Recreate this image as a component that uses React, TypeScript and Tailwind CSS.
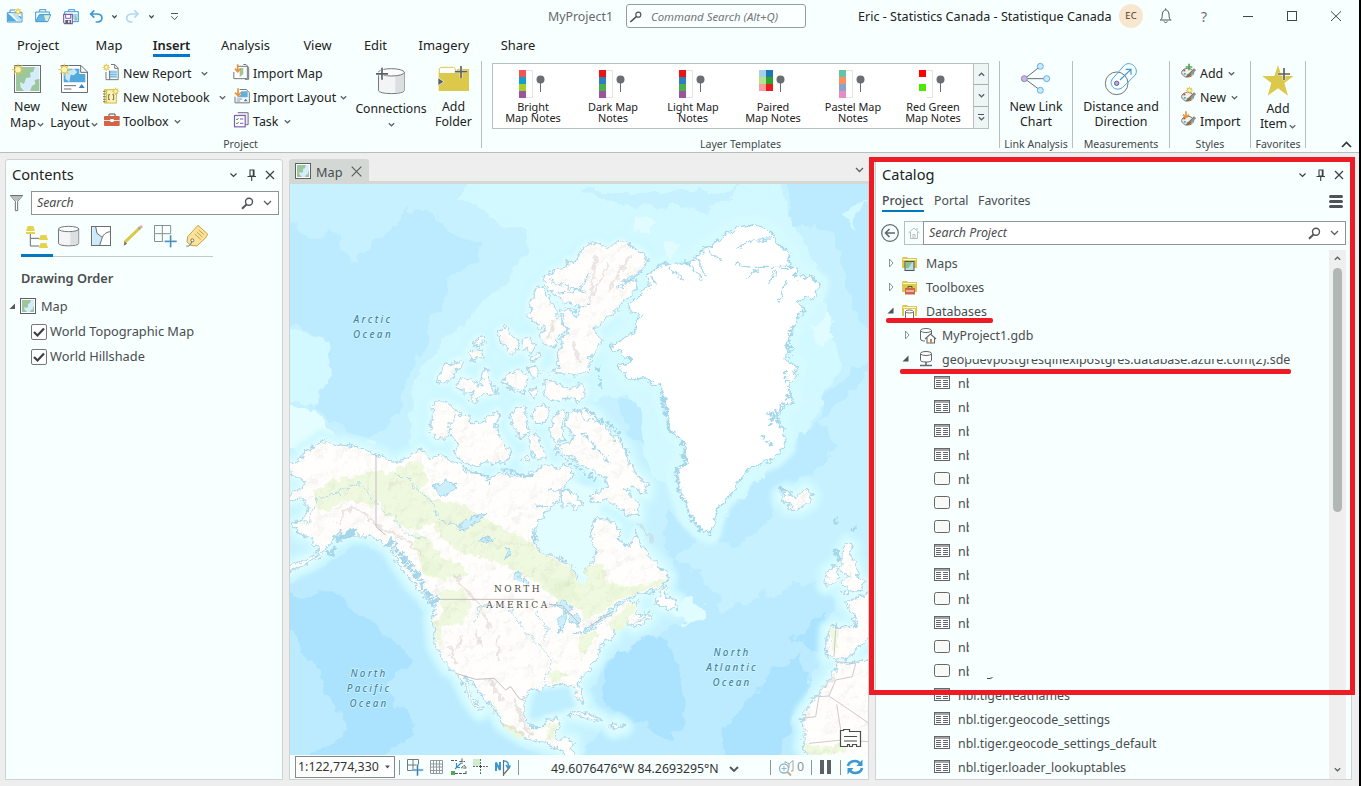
import React from "react";

type BoxProps = { x: number; y: number; w: number; h: number; s?: number; className?: string; children: React.ReactNode };

/* Icon cell: artwork is drawn on a grid of `s` units per pixel. */
function Art({ x, y, w, h, s = 3, className = "", children }: BoxProps) {
  return (
    <svg width={w / s} height={h / s} viewBox={`${x} ${y} ${w} ${h}`} className={`block shrink-0 ${className}`} fill="none">
      {children}
    </svg>
  );
}

function Chevron({ className = "", up = false }: { className?: string; up?: boolean }) {
  return (
    <svg width="7" height="5" viewBox="0 0 7 5" className={`block shrink-0 ${className}`} fill="none" stroke="#5c6064" strokeWidth="1.2">
      <path d={up ? "M.8 3.800 L3.500 1.200 L6.200 3.800" : "M.8 1.200 L3.500 3.800 L6.200 1.200"} />
    </svg>
  );
}

function WideChevron({ className = "" }: { className?: string }) {
  return (
    <svg width="9" height="6" viewBox="0 0 9 6" className={`block shrink-0 ${className}`} fill="none" stroke="#5c6064" strokeWidth="1.3">
      <path d="M1 1 L4.500 4.500 L8 1" />
    </svg>
  );
}

function Sun({ cx, cy, r }: { cx: number; cy: number; r: number }) {
  const rays = [0, 45, 90, 135, 180, 225, 270, 315];
  return (
    <g>
      {rays.map((a) => (
        <path key={a} d={`M${cx} ${cy - r * 1.1} V${cy - r * 1.8}`} stroke="#dcc84a" strokeWidth={3} transform={`rotate(${a} ${cx} ${cy})`} />
      ))}
      <circle cx={cx} cy={cy} r={r} fill="#fdf6b2" stroke="#dcb94a" strokeWidth={2.6} />
    </g>
  );
}

function MapTile({ size = 16 }: { size?: number }) {
  return (
    <svg width={size} height={size} viewBox="0 0 16 16" className="block shrink-0" fill="none">
      <rect x=".5" y=".5" width="15" height="15" fill="#fff" stroke="#5c6064" />
      <rect x="2" y="2" width="12" height="12" fill="#d5edfb" />
      <path d="M2 2h9l-1 3-2 1v3l-2 1-1-1-1 1 1 2 2 2H2zM14 14h-4l1-2 2-1v-2l1-1z" fill="#9cc79c" />
    </svg>
  );
}

const lands: string[] = [
  // mainland
  "M-10 850 L30 848 45 815 75 800 100 780 120 790 150 795 200 800 240 815 280 828 310 850 340 838 370 825 395 805 420 835 450 828 480 842 520 858 560 878 600 900 640 880 690 890 740 872 770 850 800 865 830 850 850 880 830 920 800 970 760 1010 738 1050 740 1090 760 1120 800 1130 850 1155 865 1190 872 1225 898 1215 888 1170 923 1130 908 1080 913 1020 948 1015 988 1040 993 1085 1018 1100 1043 1055 1058 1100 1113 1160 1138 1190 1133 1210 1098 1230 1053 1245 1023 1250 973 1280 933 1320 880 1355 883 1362 953 1315 993 1275 1023 1260 1048 1270 1038 1310 1083 1300 1085 1312 1038 1340 1023 1325 983 1340 973 1370 933 1400 923 1440 873 1495 868 1525 885 1560 880 1575 862 1545 850 1520 820 1510 780 1520 720 1530 705 1550 705 1610 725 1640 760 1640 780 1615 815 1615 805 1650 795 1675 850 1680 856 1740 830 1740 820 1710 760 1690 700 1670 640 1630 625 1600 590 1560 545 1500 528 1494 534 1520 558 1558 582 1590 572 1596 545 1560 520 1510 505 1480 475 1460 440 1400 435 1360 430 1320 440 1280 400 1240 370 1210 330 1150 300 1100 260 1075 230 1065 180 1065 150 1080 160 1052 130 1080 100 1120 60 1150 -10 1178 -10 1165 50 1140 92 1115 70 1075 30 1060 10 1030 40 1020 60 985 50 955 10 960 -10 950 40 925 48 905 15 885 -10 870 Z",
  // banks, victoria, melville, prince patrick
  "M430 670 L470 668 500 685 520 695 485 740 475 770 445 782 420 755 430 715 Z",
  "M480 735 L500 710 535 710 570 735 600 710 625 692 632 710 615 735 640 780 668 825 645 850 590 845 555 860 515 840 495 815 510 795 490 770 Z",
  "M445 600 L465 560 510 540 520 555 500 575 485 600 460 608 Z",
  "M500 625 L520 588 560 605 575 620 580 575 592 565 600 600 622 625 620 645 585 645 550 668 540 655 555 638 520 635 Z",
  "M535 520 L555 505 580 510 575 535 550 540 Z M550 490 L575 472 588 490 565 500 Z",
  "M628 455 L650 440 665 465 685 475 690 510 665 520 650 500 635 490 Z",
  "M700 475 L720 472 738 495 725 515 705 510 Z M722 528 L750 525 748 538 728 540 Z",
  "M640 600 L660 580 700 570 710 600 700 640 675 630 Z M715 565 L740 558 752 580 730 590 Z M722 625 L745 622 748 650 728 655 Z",
  "M668 700 L690 680 715 688 712 720 720 755 700 775 680 755 665 735 Z",
  "M735 685 L765 675 782 685 765 730 740 730 728 705 Z M785 770 L790 715 815 690 835 692 820 730 822 760 830 780 800 785 Z",
  "M722 770 L740 762 752 790 768 830 750 840 725 815 Z M700 830 L715 825 725 845 705 850 Z",
  // axel heiberg, ellesmere, devon
  "M720 410 L725 360 745 318 765 325 790 370 805 400 830 440 830 455 800 480 798 500 770 495 750 465 770 450 745 430 Z",
  "M765 300 L790 270 830 265 835 240 860 250 870 220 895 195 930 190 960 205 990 185 1030 200 1060 215 1080 245 1060 275 1000 305 1045 300 1048 318 1010 360 980 395 945 425 915 445 925 470 940 480 930 505 905 530 895 575 860 585 830 580 780 575 810 560 805 520 820 500 815 480 840 460 825 425 815 390 845 385 862 410 870 380 830 370 800 350 780 330 Z",
  "M765 600 L800 605 830 625 885 615 890 640 870 660 835 655 800 665 765 650 Z",
  // baffin
  "M832 740 L840 700 860 690 880 700 930 720 975 770 1010 810 1020 850 1040 880 1075 915 1070 945 1030 925 1010 925 1045 970 1048 1010 1020 1005 990 980 950 960 930 970 905 955 925 935 960 925 945 890 900 870 860 840 820 820 795 800 840 790 855 770 Z",
  "M870 690 L900 690 930 715 920 725 890 715 Z M815 930 L850 935 878 970 865 985 840 975 820 985 Z",
  "M1100 1260 L1128 1215 1135 1250 1165 1262 1162 1290 1110 1278 Z",
  "M1025 1330 L1070 1312 1075 1322 1035 1342 Z",
  // iceland
  "M1475 945 L1495 935 1520 950 1550 925 1570 945 1565 965 1535 985 1500 985 1490 965 1475 960 Z",
  // british isles, europe, africa
  "M1660 1115 L1675 1090 1692 1100 1680 1125 1700 1150 1708 1190 1728 1205 1715 1230 1660 1240 1675 1220 1660 1205 1675 1190 1655 1165 Z",
  "M1615 1175 L1640 1155 1650 1175 1642 1205 1610 1218 Z",
  "M1790 1215 L1735 1238 1715 1250 1670 1270 1690 1295 1705 1340 1635 1340 1618 1350 1615 1430 1640 1438 1685 1430 1710 1400 1735 1375 1790 1360 Z",
  "M1790 1440 L1735 1435 1680 1455 1650 1450 1620 1500 1590 1540 1545 1600 1540 1615 1548 1650 1540 1700 1555 1725 1565 1760 1790 1760 Z",
  // antilles
  "M840 1605 L865 1594 905 1602 940 1622 905 1618 870 1608 Z M960 1635 L985 1632 1005 1642 975 1650 Z",
];

const greenland =
  "M963 500 L1040 455 1052 400 1018 395 1025 365 1078 325 1075 285 1110 260 1155 245 1180 250 1215 240 1250 205 1315 160 1345 140 1400 135 1440 150 1470 190 1505 225 1490 250 1520 265 1520 295 1560 288 1590 310 1580 345 1520 368 1545 385 1525 415 1500 470 1485 540 1525 560 1500 620 1510 660 1460 705 1480 740 1490 800 1455 835 1380 865 1330 935 1295 970 1280 1005 1265 1062 1235 1050 1195 1005 1170 930 1160 870 1195 825 1180 780 1150 755 1130 690 1115 620 1070 592 1025 600 985 555 1030 540 Z";

const greens: string[] = [
  "M75 940 L130 900 200 890 260 870 300 880 320 860 400 850 420 900 400 930 440 960 520 975 600 1020 660 1050 720 1080 760 1120 850 1160 865 1200 895 1220 895 1300 830 1270 780 1240 735 1200 690 1180 640 1150 560 1130 500 1110 440 1060 430 1000 380 950 320 940 250 980 160 960 110 1000 80 980 Z",
  "M370 1050 L420 1080 460 1130 530 1160 540 1190 450 1200 400 1180 380 1120 Z",
  "M260 880 L400 930 440 1030 360 1050 280 1000 Z",
  "M440 1240 L520 1220 550 1280 520 1330 440 1340 460 1290 Z M435 1320 L455 1330 460 1400 440 1370 Z",
  "M890 1160 L940 1150 960 1210 1020 1220 1090 1210 1130 1190 1128 1210 1050 1240 980 1260 940 1300 880 1320 Z",
  "M965 1320 L1030 1270 1045 1270 1000 1350 960 1360 Z M873 1370 L930 1350 900 1400 873 1420 Z",
  "M780 1480 L800 1465 840 1490 790 1510 Z M870 1390 L900 1390 890 1420 Z M610 1550 L635 1600 615 1590 Z M640 1635 L710 1660 700 1675 650 1650 Z M780 1630 L805 1632 790 1665 775 1680 Z",
  "M1622 1345 L1650 1345 1640 1420 1625 1400 Z M1545 1690 L1600 1700 1680 1690 1660 1720 1560 1730 Z M360 850 L395 845 410 870 340 870 Z",
];

function WorldMap() {
  return (
    <svg width="578" height="571" viewBox="290 184 578 571" className="block">
      <defs>
        <filter id="coast" x="-5%" y="-5%" width="110%" height="110%">
          <feTurbulence type="fractalNoise" baseFrequency="0.05" numOctaves="4" seed="4" />
          <feDisplacementMap in="SourceGraphic" scale="30" xChannelSelector="R" yChannelSelector="G" />
        </filter>
        <filter id="depth" x="-5%" y="-5%" width="110%" height="110%">
          <feTurbulence type="fractalNoise" baseFrequency="0.018" numOctaves="4" seed="9" />
          <feDisplacementMap in="SourceGraphic" scale="60" xChannelSelector="R" yChannelSelector="G" />
        </filter>
        <filter id="soft"><feGaussianBlur stdDeviation="7" /></filter>
        <filter id="relief" x="0" y="0" width="100%" height="100%">
          <feTurbulence type="fractalNoise" baseFrequency="0.022" numOctaves="4" seed="2" result="n" />
          <feDiffuseLighting in="n" surfaceScale="9" lightingColor="#fffdf9" diffuseConstant="1.25" result="l">
            <feDistantLight azimuth="225" elevation="55" />
          </feDiffuseLighting>
          <feComposite in="l" in2="SourceGraphic" operator="in" />
        </filter>
      </defs>
      <g transform="translate(289 180) scale(.333333)">
        <rect width="1750" height="1740" fill="#c8f1ff" />
        <g filter="url(#depth)">
          <path d="M-60 110 L0 120 60 180 140 150 190 250 250 190 330 150 350 85 430 95 480 160 570 190 575 240 520 280 460 280 470 370 420 450 390 520 350 620 340 700 250 775 180 750 70 690 120 600 130 480 60 460 -60 420 Z" fill="#bcebff" />
          <path d="M560 -60 L900 -60 1500 -60 1480 60 1600 300 1650 560 1520 830 1300 1060 1100 900 1000 640 820 700 600 900 360 820 370 640 420 530 560 400 720 220 700 160 500 60 Z" fill="#d2f9ff" />
          <path d="M860 30 L1380 30 1240 90 1000 80 Z" fill="#c8f1ff" />
          <path d="M1510 -60 L1800 -60 1800 540 1690 380 1640 150 1500 130 Z" fill="#bcebff" />
          <path d="M1800 520 L1700 570 1600 660 1600 740 1660 800 1560 880 1440 1010 1350 1100 1200 1040 1130 1000 1130 1110 1240 1180 1300 1290 1500 1220 1590 1200 1640 1290 1600 1420 1500 1600 1600 1800 -60 1800 -60 1230 120 1150 230 1080 330 1180 420 1330 470 1480 620 1640 840 1780 960 1600 880 1560 960 1420 1180 1330 1100 1200 Z" fill="#bcebff" />
          <path d="M1400 1080 L1560 960 1640 1000 1560 1120 1380 1190 1330 1160 Z" fill="#c8f1ff" />
          <path d="M-60 1240 L130 1240 230 1310 370 1440 300 1520 380 1650 210 1800 -60 1800 180 1650 Z" fill="#abe3ff" />
          <path d="M960 1420 L1120 1360 1180 1480 1200 1600 1140 1690 1030 1620 940 1560 Z M1420 1500 L1540 1420 1560 1520 1460 1760 1290 1760 1310 1640 Z M1500 1380 L1620 1300 1600 1420 Z" fill="#abe3ff" />
          <path d="M990 650 L1060 690 1070 800 1020 770 Z" fill="#bcebff" />
          <path d="M20 460 L130 480 120 600 70 680 -40 650 -40 450 Z M1650 90 L1720 60 1700 150 Z" fill="#d2f9ff" />
          <path d="M-60 690 L60 690 180 780 300 800 -60 820 Z" fill="#e4fdff" />
        </g>
        <g filter="url(#soft)" fill="none" strokeLinejoin="round">
          {lands.map((d, i) => (
            <path key={i} d={d} stroke="#cdf8ff" strokeWidth="60" fill="#d8fbff" />
          ))}
          {lands.map((d, i) => (
            <path key={i} d={d} stroke="#e0fcff" strokeWidth="24" fill="#e0fcff" />
          ))}
          <path d={greenland} stroke="#d6fbff" strokeWidth="60" />
          <path d="M780 930 L840 900 930 930 940 1100 900 1230 840 1180 740 1110 740 1050 Z" fill="#e2fdff" />
          <path d="M740 1530 L840 1520 860 1580 720 1620 Z" fill="#bfeeff" />
        </g>
        <g filter="url(#depth)">
          <path d="M1150 1290 L1190 1255 1250 1290 1190 1345 Z M1560 440 L1620 400 1640 470 1600 500 Z M1120 190 L1170 200 1140 240 Z M1040 110 L1100 130 1040 160 Z" fill="#e0fcff" />
        </g>
        <g filter="url(#coast)" stroke="#a6d6ea" strokeWidth="4" strokeLinejoin="round">
          {lands.map((d, i) => (
            <path key={i} d={d} fill="#fffefb" />
          ))}
          <path d={greenland} fill="#ffffff" />
        </g>
        <g filter="url(#coast)" fill="#eaf8d6">
          {greens.map((d, i) => (
            <path key={i} d={d} />
          ))}
        </g>
        <g filter="url(#coast)" opacity=".6" fill="#dff3c8">
          <path d="M740 1180 L850 1200 880 1260 810 1260 Z M390 1120 L440 1140 450 1190 410 1180 Z M960 1220 L1020 1225 980 1250 Z" />
        </g>
        <g filter="url(#coast)">
          <g filter="url(#relief)" style={{ mixBlendMode: "multiply" }} opacity=".24">
            {lands.map((d, i) => (
              <path key={i} d={d} fill="#fff" />
            ))}
          </g>
        </g>
        {/* mountain shading */}
        <g filter="url(#coast)" stroke="#cfc4bf" strokeLinecap="round" fill="none" opacity=".4">
          <path d="M145 1035 L165 995 210 985 240 1020 290 1050 350 1080 400 1130" strokeWidth="8" />
          <path d="M500 1190 L540 1240 580 1290 600 1340 M630 1370 V1440 M560 1350 L580 1400 M480 1400 L500 1450 M520 1370 L500 1410" strokeWidth="8" />
          <path d="M675 1560 L700 1620 725 1665 M640 1630 L700 1660 M600 1500 L640 1560" strokeWidth="10" />
          <path d="M920 230 L910 330 M960 250 L900 370 M1020 230 L960 330 M790 420 L780 470 M850 490 L870 540 M1640 1490 L1600 1520 M1050 1030 L1090 1080" strokeWidth="8" />
        </g>
        {/* lakes, rivers and fjords */}
        <g filter="url(#coast)" stroke="#a6d6ea" fill="none" strokeWidth="3.5" strokeLinejoin="round">
          <path d="M430 920 L470 905 500 910 495 930 460 950 450 930 Z M515 1040 L550 1010 590 1000 560 1030 520 1050 Z M565 1090 L585 1072 612 1078 590 1085 Z M650 1130 L658 1105 665 1115 655 1135 Z M675 1200 L680 1175 695 1180 700 1215 710 1190 715 1210" fill="#cceffb" />
          <path d="M780 1275 L820 1260 850 1285 830 1300 810 1280 Z M812 1360 L810 1310 830 1300 825 1350 Z M835 1300 L865 1305 870 1335 840 1320 Z M855 1362 L890 1350 900 1342" fill="#cceffb" />
          <path d="M20 1020 L60 1030 80 960 130 945 210 910 260 970 320 1020 350 1060 410 1075" strokeWidth="2.5" />
          <path d="M320 880 L370 900 380 930 430 960 445 1020 515 1040" strokeWidth="3" />
          <path d="M560 1330 L570 1280 640 1275 680 1310 720 1370 760 1405 790 1440 770 1510 M740 1300 L775 1340 765 1380" strokeWidth="2.5" />
          <path d="M520 870 L600 890 605 915 M640 870 L730 890 M740 975 L775 985 M780 930 L830 930" strokeWidth="5" />
        </g>
        <g filter="url(#coast)" stroke="#a6d6ea" fill="none" strokeWidth="6">
          <path d="M300 1080 L340 1130 380 1180 410 1230 440 1270" strokeWidth="20" strokeDasharray="15 5 8 4" />
          <path d="M140 1080 L200 1050 M120 1125 L140 1100" strokeWidth="13" />
          <path d="M1120 650 L1135 720 1150 760 M1180 780 L1190 840 1170 870" strokeWidth="14" strokeDasharray="18 5" />
          <path d="M1160 870 L1175 940 1210 1020 1240 1050 1262 1058" strokeWidth="9" strokeDasharray="9 5" />
          <path d="M1505 450 L1500 530 M1490 570 L1500 650 1450 710 1440 740 M1420 770 L1450 800 M1440 700 L1480 740" strokeWidth="11" strokeDasharray="9 6" />
          <path d="M1145 260 L1180 300 M1190 240 L1240 300 M1220 225 L1250 290 M1240 200 L1300 245 M1340 210 L1380 185 1450 175 M1340 255 L1390 262 1500 262 M1375 295 L1410 265 M1440 310 L1460 275 M1470 365 L1490 300 M1085 290 L1110 315" strokeWidth="4" />
          <path d="M1470 920 L1485 935 M1635 1110 L1650 1140 M1690 1050 L1700 1040 M1637 1018 L1640 1028" strokeWidth="9" />
          <path d="M925 560 L935 620 M890 690 L980 750 1020 830 M880 760 L920 800 960 850 M800 820 L880 870 920 900" strokeWidth="8" strokeDasharray="10 7" />
          <path d="M780 300 L890 340 M800 340 L890 330 M900 280 L870 330 M860 390 L900 370 M1060 275 L980 330" strokeWidth="3.5" />
        </g>
        <path d="M261 825 V1040 L290 1065 M450 1258 H735 M500 1480 L560 1498 615 1495 650 1530 665 1520 690 1555 706 1562 M780 1273 L820 1277 870 1330 M900 1340 L970 1295" stroke="#bdb4b8" strokeWidth="2.6" fill="none" />
        <path d="M1638 1445 L1700 1450 1690 1490 1640 1500 1620 1548 1590 1550 1580 1610 1540 1615 M1620 1548 L1740 1630 M1643 1573 L1660 1680 1560 1690 M1660 1680 L1740 1685 M1640 1350 L1635 1430" stroke="#c9bfc6" strokeWidth="2.6" fill="none" />
      </g>
      <g fontFamily="Noto Sans, sans-serif" fontStyle="italic" fontSize="9.8" fill="#3f86a3" fontWeight="500" textAnchor="middle" stroke="#d8f6ff" strokeWidth="1.4" paintOrder="stroke">
        <g letterSpacing="2.4">
          <text x="373" y="323">Arctic</text>
          <text x="373" y="338">Ocean</text>
        </g>
        <g letterSpacing="2.2">
          <text x="369" y="677">North</text>
          <text x="369" y="692">Pacific</text>
          <text x="369" y="707">Ocean</text>
          <text x="732" y="656">North</text>
          <text x="732" y="671">Atlantic</text>
          <text x="732" y="686">Ocean</text>
        </g>
      </g>
      <g fontFamily="DejaVu Serif, serif" fontSize="9" fill="#4e4e46" textAnchor="middle" letterSpacing="2.5" stroke="#fff" strokeWidth="1.2" paintOrder="stroke">
        <text x="518" y="592">NORTH</text>
        <text x="518" y="608">AMERICA</text>
      </g>
      <path d="M840.5 730.5 h3 v-1 h6 v2 h11 v15 h-4 v-2 h-4 v2 h-3 v-2 h-2 v2 h-7 z M844 736.5 h13 M844 741 h13" fill="#fffffc" stroke="#4b4e50" strokeWidth="1.2" />
    </svg>
  );
}

const tabs: [string, string][] = [
  ["Project", "w-[76px]"],
  ["Map", "w-[66px]"],
  ["Insert", "w-[59px]"],
  ["Analysis", "w-[89px]"],
  ["View", "w-[55px]"],
  ["Edit", "w-[61px]"],
  ["Imagery", "w-[76px]"],
  ["Share", "w-[72px]"],
];

const templates: { a: string; b: string; colors: string[]; right?: string[] }[] = [
  { a: "Bright", b: "Map Notes", colors: ["#f25454", "#139fce", "#a6ce2b", "#9c559c"] },
  { a: "Dark Map", b: "Notes", colors: ["#ea1616", "#2f7fc0", "#4bb04b", "#9c559c"] },
  { a: "Light Map", b: "Notes", colors: ["#ea1616", "#2f7fc0", "#4bb04b", "#9c559c"] },
  { a: "Paired", b: "Map Notes", colors: ["#a6d0e6", "#b4e48c", "#fc9c9c", "#ffffff"], right: ["#1b78b8", "#30a22c", "#ea1a1e", "#ffffff"] },
  { a: "Pastel Map", b: "Notes", colors: ["#62c6a6", "#fc9062", "#8ea2cc", "#e88cc6"] },
  { a: "Red Green", b: "Map Notes", colors: ["#ff0000", "#ffffff", "#4ce800", "#ffffff"] },
];

function Sep() {
  return <div className="mt-[3px] h-[87px] w-px shrink-0 bg-[#b9bdbd]" />;
}

function GroupLabel({ children }: { children: React.ReactNode }) {
  return <div className="h-4 whitespace-nowrap text-center text-[10.6px] leading-4 text-[#44474a]">{children}</div>;
}

function Small({ icon, text, chev, gap = "ml-2" }: { icon: React.ReactNode; text: string; chev?: boolean; gap?: string }) {
  return (
    <div className="flex h-6 items-center whitespace-nowrap text-[12.4px]">
      {icon}
      <span className="pt-[2px]">{text}</span>
      {chev && <Chevron className={gap} />}
    </div>
  );
}

function TitleBar() {
  return (
    <div className="flex h-8 shrink-0 items-center">
      <div className="flex w-[542px] pl-[6px]">
        <Art x={18} y={0} w={84} h={96}>
          <path d="M30 38 V30 H45 M22 38 H66 V66 H22 Z" stroke="#3f97cf" strokeWidth="3" />
          <path d="M24 40 L50 64 H24 Z" fill="#52a9de" /><path d="M34 38 H44 L64 56 V64 H54 Z" fill="#bfe2f6" /><path d="M52 46 L64 50 V58 Z" fill="#4ca3da" />
          <Sun cx={54} cy={35} r={6} />
        </Art>
        <Art x={102} y={0} w={84} h={96}>
          <path d="M107 62 V36 H148 V44 M119 35 V29 H137 V35" stroke="#3f97cf" strokeWidth="3" />
          <path d="M107 65 L118 44 H152 L143 65 Z" fill="#66b6e6" stroke="#3f97cf" strokeWidth="3" /><path d="M132 46 H150 L143 63 H137 Z" fill="#dff0cf" />
        </Art>
        <Art x={186} y={0} w={78} h={96}>
          <path d="M194 44 V35 H235 V65 H218 M206 34 V29 H224 V34" stroke="#3f97cf" strokeWidth="3" />
          <path d="M216 42 H233 V62 H222 Z" fill="#a4d6f2" /><path d="M226 46 L232 60 H224 Z" fill="#8cc68c" />
          <path d="M191 43 H217 V71 H194 L191 67 Z" fill="#fff" stroke="#7b5fae" strokeWidth="3.5" /><path d="M197 43 V55 H212 V43" stroke="#7b5fae" strokeWidth="3" /><rect x="196" y="60" width="17" height="11" fill="#5d6166" /><rect x="204" y="62" width="5" height="6" fill="#fff" />
        </Art>
        <Art x={264} y={0} w={66} h={96}>
          <path d="M283 31 L272 42 L283 53 M273 42 H291 C310 42 311 65 293 66 H287" stroke="#3f97cf" strokeWidth="5" />
        </Art>
        <Art x={330} y={0} w={42} h={96}><path d="M337 46 L343.500 53 L350 46" stroke="#44474a" strokeWidth="4" /></Art>
        <Art x={372} y={0} w={63} h={96}>
          <path d="M403 31 L414 42 L403 53 M413 42 H396 C376 42 375 65 393 66 H398" stroke="#b2d9f0" strokeWidth="5" />
        </Art>
        <Art x={435} y={0} w={75} h={96}><path d="M448 46 L454.500 53 L461 46" stroke="#44474a" strokeWidth="4" /></Art>
        <Art x={510} y={0} w={36} h={96}><path d="M513 40.500 H534 M514 49 L523.500 59 L533 49" stroke="#505357" strokeWidth="3" /></Art>
      </div>
      <div className="flex w-[84px] justify-center pt-[3px] text-[12.4px] text-[#66696c]"><span className="pr-[7px]">MyProject1</span></div>
      <div className="flex h-6 w-[180px] items-center rounded-[3px] border border-[#979c9c] bg-white/40">
        <Art x={870} y={21} w={60} h={54}>
          <circle cx="904" cy="44" r="7.500" stroke="#505357" strokeWidth="3.500" /><path d="M898 50 L880 66" stroke="#505357" strokeWidth="5" />
        </Art>
        <span className="ml-1 pt-px text-[11.4px] italic text-[#73777a]">Command Search (Alt+Q)</span>
      </div>
      <div className="ml-[52px] w-[261px] whitespace-nowrap pt-[3px] text-[12.6px] text-[#222]">Eric - Statistics Canada - Statistique Canada</div>
      <div className="flex size-6 items-center justify-center rounded-full bg-[#f8e6cf] text-[9.5px] text-[#4a3a2a]">EC</div>
      <Art x={399} y={0} w={129} h={96}>
        <path d="M450 60 H484 M453 59 C458 54 456 46 457 42 C458 33 463 30 467 30 C471 30 476 33 477 42 C478 46 476 54 481 59 M467 30 V25 M462 64 C464 69 470 69 472 64" stroke="#505357" strokeWidth="3" />
      </Art>
      <div className="w-9 text-center text-[14px] text-[#6a6e72]">?</div>
      <Art x={636} y={0} w={144} h={96}><path d="M699 49.500 H729" stroke="#44474a" strokeWidth="3" /></Art>
      <Art x={780} y={0} w={120} h={96}><rect x="832.500" y="34.500" width="27" height="27" stroke="#44474a" strokeWidth="3" /></Art>
      <Art x={900} y={0} w={120} h={96}><path d="M963 34 L993 63 M993 34 L963 63" stroke="#44474a" strokeWidth="3" /></Art>
    </div>
  );
}

function Palette({ dy, children }: { dy: number; children: React.ReactNode }) {
  return (
    <Art x={510} y={186 + dy} w={60} h={72}>
      <g transform={`translate(0 ${dy})`}>
        <ellipse cx="533" cy="221" rx="18" ry="13" fill="#f1f3f3" stroke="#74787b" strokeWidth="3" />
        <rect x="520" y="212" width="6" height="5" fill="#d0402e" /><rect x="521" y="222" width="6" height="5" fill="#459fd8" /><rect x="530" y="226" width="6" height="5" fill="#54aa54" />
        <path d="M526 236 L534 226 L552 208 L557 213 L540 232 Z" fill="#8a6a3a" /><path d="M540 224 L553 209 L558 214 L545 228 Z" fill="#909598" />
        {children}
      </g>
    </Art>
  );
}

function Ribbon() {
  return (
    <div className="flex h-[94px] shrink-0 text-[12.4px] text-[#222]">
      <div className="flex w-[481px] flex-col">
        <div className="flex h-[78px]">
          <div className="ml-[5px] flex w-11 flex-col items-center pt-1">
            <Art x={33} y={186} w={99} h={96}>
              <rect x="43.500" y="196.500" width="78" height="81" fill="#fff" stroke="#6a6e72" strokeWidth="3" />
              <rect x="48" y="201" width="70" height="72" fill="#d5edfb" />
              <path d="M48 201 H105 L100 215 90 218 92 232 78 234 72 252 60 246 62 262 72 273 H48 Z M118 273 H90 L96 258 106 252 104 240 118 236 Z" fill="#9cc79c" />
              <Sun cx={54} cy={209} r={10} />
            </Art>
            <span className="mt-[5px] h-4 leading-4">New</span>
            <span className="flex h-[15px] items-center leading-[15px]">Map<Chevron className="ml-px mt-1" /></span>
          </div>
          <div className="flex w-[50px] flex-col items-center pt-1">
            <Art x={174} y={186} w={99} h={96}>
              <path d="M184.500 196.500 H243 L262.500 216 V277.500 H184.500 Z M242 197 V217 H262" fill="#fff" stroke="#6a6e72" strokeWidth="3" />
              <path d="M191 206 H238 V222 H256 V247 H191 Z" fill="#52a9de" /><path d="M222 206 L232 216 222 226 212 224 208 246 196 236 V215 Z" fill="#c9e6f7" />
              <path d="M192 257 H228 M192 267 H214" stroke="#6a6e72" strokeWidth="3" /><path d="M236 264 L245 252 L254 264 Z" fill="#2f86c2" />
              <Sun cx={193} cy={209} r={10} />
            </Art>
            <span className="mt-[5px] h-4 leading-4">New</span>
            <span className="flex h-[15px] items-center leading-[15px]">Layout<Chevron className="ml-px mt-1" /></span>
          </div>
          <div className="ml-[3px] w-[131px] pt-[3px]">
            <Small
              icon={
                <Art x={306} y={183} w={63} h={72}>
                  <path d="M318 216 V239 H354.500 V204 L344 193.500 H333 M344 194 V205 H354" fill="#fff" stroke="#74787b" strokeWidth="3" /><rect x="326" y="211" width="26" height="24" fill="#bfe0f4" /><path d="M328 216 H350 M328 223 H350 M328 230 H350" stroke="#5fa9d6" strokeWidth="2.500" /><path d="M329 212 V239" stroke="#74787b" strokeWidth="3" /><Sun cx={319} cy={202} r={6} />
                </Art>
              }
              text="New Report" chev gap="ml-[9px]"
            />
            <Small
              icon={
                <Art x={306} y={255} w={63} h={72}>
                  <rect x="314" y="269" width="35" height="40" fill="#fdf3b4" stroke="#d2ba40" strokeWidth="3" /><path d="M309 274 H317 M309 282 H317 M309 290 H317 M309 298 H317 M309 305 H317" stroke="#74787b" strokeWidth="3" /><path d="M330 284 H326 V299 H330 M337 284 H341 V299 H337" stroke="#505357" strokeWidth="2.500" /><path d="M320 270 V308" stroke="#d2ba40" strokeWidth="3" /><Sun cx={347} cy={274} r={6} />
                </Art>
              }
              text="New Notebook" chev gap="ml-[9px]"
            />
            <Small
              icon={
                <Art x={306} y={327} w={63} h={72}>
                  <path d="M327 348 V342 H345 V348" stroke="#6a4a40" strokeWidth="3" /><rect x="312" y="348" width="47" height="30" rx="2" fill="#cf6647" /><path d="M312 361.500 H359" stroke="#fff" strokeWidth="2.500" /><rect x="331" y="357" width="10" height="9" fill="#fff" />
                </Art>
              }
              text="Toolbox" chev gap="ml-[5px]"
            />
          </div>
          <div className="w-[119px] pt-[3px]">
            <Small
              icon={
                <Art x={702} y={183} w={60} h={72}>
                  <path d="M717 199 H745 V236 H704.500 V216 M733 193.500 H741 L749 202 V238 H738" fill="#fff" stroke="#74787b" strokeWidth="3" /><path d="M722 204 H733 V222 L722 232 Z" fill="#9cc79c" /><path d="M716 193 V212 M708 206 L716 215 L725 206" stroke="#e8943c" strokeWidth="5" />
                </Art>
              }
              text="Import Map"
            />
            <Small
              icon={
                <Art x={702} y={255} w={60} h={72}>
                  <path d="M722 268.500 H742 L751 278 V308.500 H708 V290" fill="#fff" stroke="#74787b" strokeWidth="3" /><path d="M726 274 H746 V292 H712 L726 284 Z" fill="#62b0e0" /><path d="M713 297 H730 M713 303 H724" stroke="#74787b" strokeWidth="2.500" /><path d="M734 304 L740 296 L746 304 Z" fill="#2f86c2" /><path d="M717 265 V284 M708 278 L717 287 L726 278" stroke="#e8943c" strokeWidth="5" />
                </Art>
              }
              text="Import Layout" chev gap="ml-[4px]"
            />
            <Small
              icon={
                <Art x={702} y={327} w={60} h={72}>
                  <path d="M716 338 H747.500 V374 H738" fill="#ece6f6" stroke="#74787b" strokeWidth="3" /><rect x="706.500" y="346.500" width="32" height="34" fill="#fff" stroke="#7b5fae" strokeWidth="3.500" /><path d="M711 357 L714 360 L719 354 M711 369 L714 372 L719 366" stroke="#4fa64f" strokeWidth="3" /><path d="M723 357 H733 M723 370 H733" stroke="#7b5fae" strokeWidth="3" />
                </Art>
              }
              text="Task" chev gap="ml-[6px]"
            />
          </div>
          <div className="flex w-[78px] flex-col items-center pt-[7px]">
            <Art x={102} y={195} w={99} h={90}>
              <path d="M112.500 217 V271 C112.500 284 190 284 190 271 V217" fill="#f3f5f5" stroke="#74787b" strokeWidth="3" /><path d="M163 226 L190 218 V272 L163 279 Z" fill="#dcdfdf" /><ellipse cx="151" cy="217" rx="39" ry="11" fill="#fbfdfd" stroke="#74787b" strokeWidth="3" />
              <path d="M123 203 V239 M105 221.500 H141" stroke="#f7ffff" strokeWidth="9" /><path d="M123 203 V239 M105 221.500 H141" stroke="#5c6064" strokeWidth="5" />
            </Art>
            <span className="mt-[6px] h-4 text-[12.2px] leading-4">Connections</span>
            <Chevron className="mt-[5px]" />
          </div>
          <div className="flex w-[46px] flex-col items-center pl-px pt-[6px]">
            <Art x={285} y={192} w={102} h={87}>
              <path d="M292 221 V206 L297 202 H335 L340 206 V221" fill="#fff" stroke="#dcc84a" strokeWidth="3" /><path d="M290 219 H345 V207 H381 V273 H290 Z" fill="#dcc84a" /><path d="M288 233 L306 245 L288 257 Z" fill="#5c6064" stroke="#fff" strokeWidth="2" />
              <path d="M357 198 V234 M339 215 H375" stroke="#fffbe0" strokeWidth="8" /><path d="M357 198 V234 M339 215 H375" stroke="#5c6064" strokeWidth="5" />
            </Art>
            <span className="mt-[6px] h-[15px] leading-4">Add</span>
            <span className="h-4 leading-4">Folder</span>
          </div>
        </div>
        <GroupLabel>Project</GroupLabel>
      </div>
      <Sep />
      <div className="flex w-[517px] flex-col">
        <div className="h-[78px] pl-[10px] pt-[5px]">
          <div className="flex h-[66px] w-[497px] border border-[#babebe] bg-white">
            {templates.map((t) => (
              <div key={t.a} className="flex w-20 shrink-0 flex-col items-center pt-[5px] text-[10.9px] leading-[11px]">
                <svg width="30" height="30" viewBox="0 0 30 30" className="block" fill="none">
                  <rect x="1.500" y="1.500" width="13" height="27" fill="#fff" stroke="#e2e4ee" />
                  {t.colors.map((c, i) => (
                    <rect key={i} x="1" y={1 + i * 7} width="7" height="7" fill={c} />
                  ))}
                  {t.right?.map((c, i) => (
                    <rect key={i} x="8" y={1 + i * 7} width="7" height="7" fill={c} />
                  ))}
                  <circle cx="22.500" cy="10.500" r="4" fill="#6a6e72" /><path d="M22.500 10 V23" stroke="#6a6e72" />
                </svg>
                <span className="mt-[2px]">{t.a}</span>
                <span>{t.b}</span>
              </div>
            ))}
            <div className="flex w-[15px] shrink-0 flex-col border-l border-[#babebe] bg-[#eef5f5]">
              <div className="flex h-[21px] items-center justify-center border-b border-[#a9adad]"><Chevron up /></div>
              <div className="flex h-[22px] items-center justify-center border-b border-[#a9adad]"><Chevron /></div>
              <div className="flex flex-1 flex-col items-center justify-center"><div className="mb-px h-px w-[6px] bg-[#505357]" /><Chevron /></div>
            </div>
          </div>
        </div>
        <GroupLabel>Layer Templates</GroupLabel>
      </div>
      <Sep />
      <div className="flex w-[72px] flex-col">
        <div className="flex h-[78px] flex-col items-center pt-1">
          <Art x={30} y={186} w={99} h={99}>
            <path d="M44 236 L91 199 M44 236 H110 M44 236 L91 271" stroke="#6a6e72" strokeWidth="3" /><circle cx="43" cy="236" r="9" fill="#c5b8e4" stroke="#8676ac" strokeWidth="2.500" />
            {[[91, 199], [110, 236], [91, 271]].map(([a, b]) => (
              <circle key={b} cx={a} cy={b} r="9" fill="#cdeafb" stroke="#4ba5dc" strokeWidth="2.500" />
            ))}
          </Art>
          <span className="mt-[4px] h-4 leading-4">New Link</span>
          <span className="h-4 leading-[14px]">Chart</span>
        </div>
        <GroupLabel>Link Analysis</GroupLabel>
      </div>
      <Sep />
      <div className="flex w-24 flex-col">
        <div className="flex h-[78px] flex-col items-center pt-1">
          <Art x={282} y={186} w={102} h={102}>
            <circle cx="320" cy="250" r="34" stroke="#74787b" strokeWidth="3" />
            <path d="M307 237 L343 196 C362 180 388 205 376 225 L338 262 C316 278 295 255 307 237 Z" stroke="#4ba5dc" strokeWidth="3" />
            <path d="M330 240 L362 209 M347 208 H363 V224" stroke="#3f97cf" strokeWidth="3.500" /><circle cx="320" cy="250" r="6.500" fill="#b9a9dc" stroke="#6b5896" strokeWidth="3" />
          </Art>
          <span className="mt-[3px] h-4 whitespace-nowrap leading-4">Distance and</span>
          <span className="h-4 leading-[14px]">Direction</span>
        </div>
        <GroupLabel>Measurements</GroupLabel>
      </div>
      <Sep />
      <div className="flex w-20 flex-col">
        <div className="h-[78px] pl-[10px] pt-[3px]">
          <Small icon={<Palette dy={0}><path d="M537 194 V214 M527 204 H547" stroke="#54aa54" strokeWidth="5" /></Palette>} text="Add" chev gap="ml-[5px]" />
          <Small icon={<Palette dy={72}><Sun cx={538} cy={202} r={6} /></Palette>} text="New" chev gap="ml-[5px]" />
          <Small icon={<Palette dy={144}><path d="M528 193 V210 M519 203 L528 212 L537 203" stroke="#e8943c" strokeWidth="5" /></Palette>} text="Import" />
        </div>
        <GroupLabel>Styles</GroupLabel>
      </div>
      <Sep />
      <div className="flex w-[54px] flex-col">
        <div className="flex h-[78px] flex-col items-center pt-1">
          <Art x={753} y={186} w={102} h={108}>
            <path d="M804 196 L815 228 H851 L823 249 L834 287 L804 265 L773 287 L784 249 L757 228 H793 Z" fill="#dcc84a" />
            <path d="M822 203 V241 M803 222 H841" stroke="#fffbe0" strokeWidth="8" /><path d="M822 204 V240 M804 222 H840" stroke="#5c6064" strokeWidth="5" />
          </Art>
          <span className="mt-[3px] h-[15px] leading-4">Add</span>
          <span className="flex h-4 items-center leading-4">Item<Chevron className="ml-[2px] mt-1" /></span>
        </div>
        <GroupLabel>Favorites</GroupLabel>
      </div>
      <Sep />
      <div className="flex flex-1 items-end justify-end pb-[4px] pr-[7px]">
        <svg width="11" height="7" viewBox="0 0 11 7" fill="none" stroke="#333" strokeWidth="1.600"><path d="M1 6 L5.500 1.500 L10 6" /></svg>
      </div>
    </div>
  );
}

function PaneButtons() {
  return (
    <svg width="46" height="14" viewBox="0 0 46 14" fill="none" stroke="#3c4043" strokeWidth="1.200" className="-mt-[2px] block shrink-0">
      <path d="M1.500 5.500 L4.500 8.500 L7.500 5.500" />
      <path d="M21 2 H25 V8 H21 Z M18.500 8.500 H27 M22.700 9 V13 M24.300 2 V8" strokeWidth="1.100" />
      <path d="M37 3 L45 11 M45 3 L37 11" />
    </svg>
  );
}

function SearchGlyph({ className = "" }: { className?: string }) {
  return (
    <svg width="13" height="13" viewBox="0 0 13 13" fill="none" stroke="#505357" className={`block shrink-0 ${className}`}>
      <circle cx="8" cy="4.800" r="3.500" strokeWidth="1.400" /><path d="M5.500 7.500 L1 11.800" strokeWidth="1.900" />
    </svg>
  );
}

function Contents() {
  return (
    <div className="flex w-[278px] shrink-0 flex-col rounded-t-[3px] border border-[#ced3d2] bg-[#f7ffff] text-[12.8px] text-[#4a4d50]">
      <div className="flex h-[31px] items-center justify-between pl-[6px] pr-[7px]">
        <span className="pb-px text-[14.6px] text-[#222]">Contents</span>
        <PaneButtons />
      </div>
      <div className="flex h-6 items-center">
        <Art x={24} y={123} w={51} h={72} className="ml-[2px]">
          <path d="M31 136.500 H68 L53 154 V182 H46 V154 Z" fill="#fff" stroke="#6a6e72" strokeWidth="3" /><path d="M33 138 H66 L54 152 H46 Z" fill="#b9bdbf" />
        </Art>
        <div className="ml-[6px] flex h-6 w-[248px] items-center border border-[#8f9494] bg-white">
          <span className="w-[203px] pl-[5px] pt-px text-[12.3px] italic">Search</span>
          <SearchGlyph className="ml-[6px]" />
          <WideChevron className="ml-[9px]" />
        </div>
      </div>
      <div className="ml-[15px] flex h-[42px] w-48 items-end border-b border-[#c4c9c9] pt-2">
        <div className="-mb-px border-b-[3px] border-[#0079c1]">
          <Art x={63} y={219} w={96} h={90}>
            <path d="M91 249 V285 H118 M91 262 H118" stroke="#6a6e72" strokeWidth="3" />
            {[[78, 225], [117, 252], [117, 276]].map(([a, b], i) => (
              <path key={i} d={`M${a + 5} ${b} H${a + 22} L${a + 27} ${b + 15} H${a} Z`} fill="#e6d34c" />
            ))}
            <path d="M78 243 H105 V249 H78 Z" fill="#e6d34c" />
          </Art>
        </div>
        <Art x={159} y={219} w={96} h={99}>
          <path d="M175.500 237 V280 C175.500 290 236 290 236 280 V237" fill="#f3f5f5" stroke="#74787b" strokeWidth="3" /><path d="M211 244 L235 239 V281 L211 286 Z" fill="#dcdfdf" /><ellipse cx="206" cy="237" rx="30.500" ry="8" fill="#fbfdfd" stroke="#74787b" strokeWidth="3" />
        </Art>
        <Art x={255} y={219} w={96} h={99}>
          <rect x="274.500" y="229.500" width="57" height="57" fill="#fff" stroke="#6a6e72" strokeWidth="3" /><path d="M277 231 H287 L291 250 306 262 300 285 H277 Z" fill="#cdeafb" /><path d="M287 230 L291 250 L307 262 L299 286 M307 262 C312 250 322 246 331 245" stroke="#6a6e72" strokeWidth="3" />
        </Art>
        <Art x={351} y={219} w={96} h={99}>
          <path d="M374 277 L417 236" stroke="#dcc84a" strokeWidth="9" /><path d="M416 237 L420 233" stroke="#9a9ea0" strokeWidth="9" /><path d="M420 233 L426 228" stroke="#f0a090" strokeWidth="8" /><path d="M371 287 L374 274 L381 281 Z" fill="#6a6e72" />
        </Art>
        <Art x={447} y={219} w={96} h={99}>
          <path d="M463.500 226.500 H512 V251 H463.500 Z M463.500 251 V274.500 H487 V226 M487 274 H490" stroke="#8a8e90" strokeWidth="3" /><path d="M512 256 V292 M494 274 H530" stroke="#b4defa" strokeWidth="8" /><path d="M512 256 V292 M494 274 H530" stroke="#4c7c9c" strokeWidth="3" />
        </Art>
        <Art x={543} y={219} w={96} h={99}>
          <path d="M563 260 L594 226 L623 252 L618 262 L591 288 L572 286 L561 276 Z" fill="#fbe39a" stroke="#c4a43c" strokeWidth="3" /><path d="M584 252 L602 268 M590 246 L607 261 M596 240 L612 254" stroke="#b4943c" strokeWidth="2.500" /><circle cx="577" cy="271" r="4.500" fill="#fff" stroke="#6a6e72" strokeWidth="3" /><path d="M575 275 C572 286 566 290 559 288" stroke="#6a6e72" strokeWidth="3" />
        </Art>
      </div>
      <div className="flex h-11 items-center pl-[15px] text-[12.8px] font-semibold">Drawing Order</div>
      <div className="-mt-px flex h-3 items-center">
        <svg width="7" height="7" viewBox="0 0 7 7" className="ml-[3px] block"><path d="M6 .5 V6 H.5 Z" fill="#55595c" /></svg>
        <span className="ml-[4px] mr-[5px]"><MapTile /></span>
        <span className="pt-px">Map</span>
      </div>
      {["World Topographic Map", "World Hillshade"].map((n, i) => (
        <div key={n} className={i === 0 ? "mt-[7px] flex h-[25px] items-center pl-[25px]" : "flex h-[25px] items-center pl-[25px]"}>
          <svg width="16" height="16" viewBox="0 0 16 16" fill="none"><rect x=".5" y=".5" width="15" height="15" rx="1.500" fill="#fff" stroke="#74787b" /><path d="M3 8 L6.500 11.500 L13 4.500" stroke="#3c4043" strokeWidth="2.200" /></svg>
          <span className="ml-[3px]">{n}</span>
        </div>
      ))}
    </div>
  );
}

function StatusBar() {
  const rule = <div className="h-[15px] w-px shrink-0 bg-[#8f9494]" />;
  return (
    <div className="flex h-[25px] items-center border-b border-[#ced3d2] bg-[#f7ffff] text-[12.4px] text-[#333]">
      <div className="ml-[5px] flex h-[22px] w-[100px] items-center border border-[#85898a] bg-white">
        <span className="w-[88px] whitespace-nowrap pl-[2px]">1:122,774,330</span>
        <svg width="7" height="4" viewBox="0 0 7 4"><path d="M1 .5 H6 L3.500 3.500 Z" fill="#505357" /></svg>
      </div>
      <span className="w-[4px]" />
      {rule}
      <Art s={1} x={400} y={755} w={118} h={24}>
        <path d="M407.500 759.500 H418.500 V765 M407.500 759.500 V770.500 H412 M407.500 765 H418.500 M413 759.500 V769" stroke="#74787b" />
        <path d="M417.500 764 V776 M411.500 770 H423.500" stroke="#b4defa" strokeWidth="2.600" /><path d="M417.500 764.500 V775.500 M412 770 H423" stroke="#4c7c9c" strokeWidth="1.100" />
        <path d="M430.500 760.500 H442.500 V773.500 H430.500 Z M430.500 764 H442.500 M430.500 767 H442.500 M430.500 770.500 H442.500 M433.500 760.500 V773.500 M436.500 760.500 V773.500 M439.500 760.500 V773.500" stroke="#94999b" />
        <path d="M455 769 L461 763 M456.500 763 V767.500 H460" stroke="#3f8fc4" strokeWidth="1.200" /><path d="M451 760.500 H457 M462 758.500 V764 M459.500 761.500 H465 M461.500 768 L464 765 L466.500 768 Z M455 773.500 H466 M466 771 V774" stroke="#55595c" strokeDasharray="3 1" /><rect x="451" y="771" width="4" height="4" fill="#54aa54" />
        <rect x="473" y="759" width="7" height="7" fill="#cfeccc" /><path d="M480.500 759 V765 M480.500 769 V775 M473 766.500 H478 M483 766.500 H488" stroke="#6a6e72" strokeDasharray="2 1" /><path d="M480.500 765 V768 M479 766.500 H482" stroke="#3c4043" />
        <path d="M496 771 V762.500 L500 770 V762" stroke="#3f97cf" strokeWidth="2" /><path d="M503.500 760 V776 M504 774 L510 767" stroke="#6a6e72" strokeWidth="1.200" /><path d="M504 761 C508 761 509 764 508 767 M506 765 L508 768 L510.500 765.500" stroke="#3f97cf" strokeWidth="1.500" />
      </Art>
      {rule}
      <span className="ml-8 w-[171px] whitespace-nowrap pt-[5px] text-[12.3px]">49.6076476°W 84.2693295°N</span>
      <svg width="10" height="7" viewBox="0 0 10 7" fill="none" stroke="#505357" strokeWidth="1.800" className="ml-[7px] mt-1"><path d="M1 1 L5 5 L9 1" /></svg>
      <span className="w-[31px]" />
      {rule}
      <Art s={1} x={771} y={755} w={26} h={24}>
        <circle cx="784" cy="768.500" r="4.500" stroke="#8fb8d2" strokeWidth="1.300" fill="#fff" /><path d="M787.500 772 L791 775.500" stroke="#d6a878" strokeWidth="2" /><path d="M784 766 V771 M781.500 768.500 H786.500" stroke="#8fb8d2" /><path d="M785 761.500 L789 764 L793 760.500 V771 H791 M785 761.500 V763 M789 764 V768" stroke="#a4a8aa" />
      </Art>
      <span className="w-[14px] text-[#909496]">0</span>
      {rule}
      <div className="ml-[8px] flex gap-[3px] pr-[9px]"><div className="h-[14px] w-1 bg-[#5c6064]" /><div className="h-[14px] w-1 bg-[#5c6064]" /></div>
      {rule}
      <svg width="18" height="18" viewBox="0 0 18 18" fill="none" className="ml-[5px]"><path d="M2 8 C3 2.500 11 1.500 14 5.500 M16 10 C15 15.500 7 16.500 4 12.500" stroke="#3f97cf" strokeWidth="2.600" /><path d="M16.500 1.500 V8 H10.500 Z M1.500 16.500 V10 H7.500 Z" fill="#3f97cf" /></svg>
    </div>
  );
}

function MapView() {
  return (
    <div className="ml-[6px] flex w-[580px] shrink-0 flex-col">
      <div className="flex h-[22px] items-center justify-between pr-[5px]">
        <div className="flex h-[22px] w-20 items-center rounded-t-[3px] bg-[#d3d8d5] pt-[2px] text-[12.7px] text-[#4a4d50]">
          <span className="ml-[6px] mr-[5px]"><MapTile /></span>
          <span className="pt-[3px]">Map</span>
          <svg width="11" height="11" viewBox="0 0 11 11" fill="none" stroke="#55595c" strokeWidth="1.100" className="ml-[9px]"><path d="M.7 .7 L10.300 10.300 M10.300 .7 L.7 10.300" /></svg>
        </div>
        <WideChevron />
      </div>
      <div className="h-[3px] bg-[#d3d8d5]" />
      <div className="border-x border-[#ced3d2]">
        <div className="h-[571px] overflow-hidden bg-[#c8f1ff]"><WorldMap /></div>
        <StatusBar />
      </div>
    </div>
  );
}

function FolderIcon({ kind }: { kind: string }) {
  return (
    <svg width="16" height="16" viewBox="0 0 16 16" fill="none" className="block shrink-0">
      <path d="M0 3 L1 2 H5 L6 3 H15 V13 H0 Z" fill="#dcc84a" /><path d="M1 4.500 H14" stroke="#fffbe0" />
      {kind === "Maps" && <g><rect x="3" y="6.500" width="9" height="9" fill="#b9dfe6" stroke="#505357" /><path d="M4 7 H10.500 L6.500 13 H4 Z" fill="#8cc08c" /></g>}
      {kind === "Toolboxes" && <g><path d="M6 9 V7.500 H10 V9" stroke="#6a4a40" /><rect x="3" y="9" width="10" height="6.500" fill="#cf6647" /><path d="M4 12 H12" stroke="#fff" /></g>}
      {kind === "Databases" && <g><rect x="2" y="6" width="11" height="10" fill="#fff" /><path d="M3.500 8.500 V15 C3.500 16 11.500 16 11.500 15 V8.500" fill="#fff" stroke="#6a6e72" /><ellipse cx="7.500" cy="8.500" rx="4" ry="1.500" stroke="#6a6e72" /></g>}
    </svg>
  );
}

function Expander({ open }: { open?: boolean }) {
  return (
    <svg width="8" height="10" viewBox="0 0 8 10" className="block shrink-0" fill="none">
      {open ? <path d="M6.500 1.500 V7.500 H.5 Z" fill="#505357" /> : <path d="M2.500 1 L6 5 L2.500 9 Z" stroke="#8f9494" fill="#fff" />}
    </svg>
  );
}

function TableIcon() {
  return (
    <svg width="16" height="14" viewBox="0 0 16 14" className="block shrink-0" fill="none">
      <rect x=".5" y=".5" width="15" height="12" fill="#fff" stroke="#63676b" /><rect x="1" y="1" width="14" height="2" fill="#a2a6a9" /><path d="M2 4.500 H7 M9 4.500 H14 M2 6.500 H7 M9 6.500 H14 M2 8.500 H7 M9 8.500 H14 M2 10.500 H7 M9 10.500 H14" stroke="#63676b" />
    </svg>
  );
}

function LayerIcon() {
  return (
    <svg width="16" height="14" viewBox="0 0 16 14" className="block shrink-0" fill="none">
      <rect x=".5" y=".5" width="15" height="12" rx="2" fill="#f8faf8" stroke="#63676b" />
    </svg>
  );
}

const hidden = ["t", "t", "t", "t", "l", "l", "l", "t", "t", "l", "t", "l", "l"];

function Catalog() {
  return (
    <div className="ml-[6px] flex w-[477px] shrink-0 flex-col border border-[#ced3d2] bg-[#f7ffff] text-[12.4px] text-[#4a4d50]">
      <div className="flex h-[31px] items-center justify-between pl-[6px] pr-[7px]">
        <span className="pb-px text-[14.6px] text-[#222]">Catalog</span>
        <PaneButtons />
      </div>
      <div className="flex h-[22px] items-start pl-[6px] text-[12.3px]">
        <span className="h-[21px] w-[42px] border-b-2 border-[#0079c1] font-medium leading-[19px]">Project</span>
        <span className="ml-[10px] w-[34px] leading-[19px]">Portal</span>
        <span className="ml-[10px] leading-[19px]">Favorites</span>
        <div className="ml-auto mr-[8px] mt-[4px] flex w-[14px] flex-col gap-[2px]">
          <div className="h-[3px] rounded bg-[#505357]" /><div className="h-[3px] rounded bg-[#505357]" /><div className="h-[3px] rounded bg-[#505357]" />
        </div>
      </div>
      <div className="mt-[8px] flex h-6 items-center">
        <svg width="20" height="20" viewBox="0 0 20 20" fill="none" stroke="#63676b" className="ml-[4px]"><circle cx="10" cy="10" r="8.300" strokeWidth="1.200" /><path d="M15 10 H6 M9.500 6 L5.500 10 L9.500 14" strokeWidth="1.600" /></svg>
        <div className="ml-[4px] flex h-6 w-[19px] items-center justify-center border border-r-0 border-[#babebe]">
          <svg width="12" height="12" viewBox="0 0 12 12" fill="none" stroke="#babebe"><path d="M.5 6 L6 1 L11.500 6 M2.500 5 V11.500 H9.500 V5 M9 3 V1 M5 11 V7.500 H7 V11" /></svg>
        </div>
        <div className="flex h-6 w-[423px] items-center border border-[#8f9494] bg-white">
          <span className="w-[379px] pl-[5px] pt-px text-[12.4px] italic">Search Project</span>
          <SearchGlyph className="ml-[5px]" />
          <WideChevron className="ml-[9px]" />
        </div>
      </div>
      <div className="mt-[5px] flex h-[529px]">
        <div className="w-[453px] overflow-hidden pt-[1px]">
          {["Maps", "Toolboxes", "Databases"].map((f) => (
            <div key={f} className="flex h-6 items-center pl-[11px]">
              <Expander open={f === "Databases"} />
              <span className="ml-[7px] mr-[8px]"><FolderIcon kind={f} /></span>
              <span className="pt-[2px]">{f}</span>
            </div>
          ))}
          <div className="flex h-6 items-center pl-[27px]">
            <Expander />
            <svg width="18" height="17" viewBox="0 0 18 17" fill="none" className="ml-[8px] mr-[5px]"><path d="M1.500 3.500 V12 C1.500 13.500 4 14 6 14 M12.500 3.500 V7" stroke="#63676b" /><ellipse cx="7" cy="3.500" rx="5.500" ry="2" fill="#fff" stroke="#63676b" /><path d="M6 12 L11.500 7 L17 12 M8 11 V16 H15.500 V11" fill="#fff" stroke="#63676b" strokeWidth="1.100" /><rect x="11" y="12" width="2" height="4" fill="#c08a4a" /></svg>
            <span className="pt-[2px]">MyProject1.gdb</span>
          </div>
          <div className="relative flex h-6 items-center pl-[26px]">
            <Expander open />
            <svg width="18" height="18" viewBox="0 0 18 18" fill="none" className="ml-[7px] mr-[7px]"><path d="M3.500 3.500 V10.500 C3.500 12.500 14.500 12.500 14.500 10.500 V3.500" fill="#fff" stroke="#63676b" /><ellipse cx="9" cy="3.500" rx="5.500" ry="2" fill="#fff" stroke="#63676b" /><path d="M9 12 V15 M3 15.500 H15" stroke="#63676b" strokeWidth="1.600" /></svg>
            <span className="whitespace-nowrap pt-[2px] text-[12.480px]">geopdevpostgresqlflexipostgres.database.azure.com(2).sde</span>
            <div className="absolute left-[90px] top-[2px] h-[10px] w-[301px] bg-[#f7ffff]" />
          </div>
          {hidden.map((k, i) => (
            <div key={i} className="flex h-6 items-center pl-[58px]">
              {k === "t" ? <TableIcon /> : <LayerIcon />}
              <span className="ml-[8px] w-[11px] overflow-hidden whitespace-nowrap pt-[2px]">nbl</span>
              {i === 12 && <svg width="6" height="2" viewBox="0 0 6 2" fill="none" className="ml-[18px] mt-[13px]"><path d="M0 1.500 H3 L5.500 .5" stroke="#4a4d50" /></svg>}
            </div>
          ))}
          {["nbl.tiger.featnames", "nbl.tiger.geocode_settings", "nbl.tiger.geocode_settings_default", "nbl.tiger.loader_lookuptables"].map((n) => (
            <div key={n} className="flex h-6 items-center pl-[58px]">
              <TableIcon />
              <span className="ml-[8px] whitespace-nowrap pt-[2px] text-[12.350px]">{n}</span>
            </div>
          ))}
        </div>
        <div className="flex w-[17px] flex-col items-center bg-[#efefef]">
          <Chevron up className="my-[6px]" />
          <div className="mt-px h-[244px] w-[9px] rounded-full bg-[#b1b7b4]" />
          <Chevron className="mb-[7px] mt-auto" />
        </div>
      </div>
    </div>
  );
}

export default function App() {
  return (
    <div className="relative flex h-[786px] w-[1361px] flex-col overflow-hidden border-r-2 border-black bg-[#eeeeee] font-['Noto_Sans',sans-serif]">
      <div className="flex h-[153px] shrink-0 flex-col border-b border-[#b9bdbd] bg-[#f7ffff]">
        <TitleBar />
        <div className="flex h-[26px] shrink-0 text-[12.9px] text-[#222]">
          {tabs.map(([t, w]) => (
            <div key={t} className={`flex justify-center ${w}`}>
              <span className={t === "Insert" ? "h-[25px] border-b-[3px] border-[#0078d0] pt-[4px] font-semibold leading-[18px]" : "pt-[4px] leading-[18px]"}>{t}</span>
            </div>
          ))}
        </div>
        <Ribbon />
      </div>
      <div className="flex h-[627px] pl-[5px] pt-[6px] [&>*]:h-[621px]">
        <Contents />
        <MapView />
        <Catalog />
      </div>
      {/* red callouts over the catalog pane */}
      <div className="pointer-events-none absolute left-[869px] top-[157px] h-[538px] w-[486px] border-[5px] border-[#ed1c24]" />
      <div className="pointer-events-none absolute left-[886px] top-[318px] h-[5px] w-[107px] rounded-[2px] bg-[#ed1c24]" />
      <div className="pointer-events-none absolute left-[900px] top-[369px] h-[5px] w-[391px] rounded-[2px] bg-[#ed1c24]" />
    </div>
  );
}
